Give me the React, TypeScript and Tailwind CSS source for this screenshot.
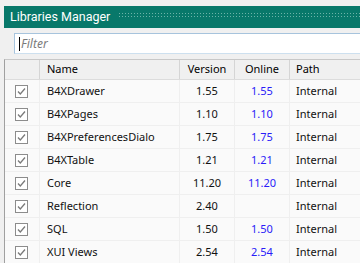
type Lib = {
  name: string;
  version: string;
  online: string;
};

const libs: Lib[] = [
  { name: "B4XDrawer", version: "1.55", online: "1.55" },
  { name: "B4XPages", version: "1.10", online: "1.10" },
  { name: "B4XPreferencesDialo", version: "1.75", online: "1.75" },
  { name: "B4XTable", version: "1.21", online: "1.21" },
  { name: "Core", version: "11.20", online: "11.20" },
  { name: "Reflection", version: "2.40", online: "" },
  { name: "SQL", version: "1.50", online: "1.50" },
  { name: "XUI Views", version: "2.54", online: "2.54" },
];

function Grip() {
  return (
    <svg width="260" height="8" className="ml-[9px] shrink-0">
      <defs>
        <pattern id="dots" width="3" height="3" patternUnits="userSpaceOnUse">
          <rect x="0" y="0" width="1" height="1" fill="#6cb3a8" />
        </pattern>
      </defs>
      <rect x="0" y="0" width="260" height="5" fill="url(#dots)" />
    </svg>
  );
}

function CheckBox() {
  return (
    <svg width="13" height="13" viewBox="0 0 13 13">
      <rect x="0.5" y="0.5" width="12" height="12" fill="#fff" stroke="#8c8c8c" />
      <polyline points="3,6.5 5.3,9 10,3.5" fill="none" stroke="#7a7a7a" strokeWidth="1.3" />
    </svg>
  );
}

export default function App() {
  return (
    <div className="w-[360px] h-[263px] overflow-hidden bg-[#f0f0f0] pt-[6px] pl-[4px] font-['Noto_Sans',sans-serif]">
      <div className="h-[22px] bg-[#08786a] flex items-center pl-[6px] overflow-hidden">
        <span className="text-white text-[12.5px] leading-none whitespace-nowrap font-['Roboto',sans-serif]">Libraries Manager</span>
        <Grip />
      </div>

      <div className="pt-[5px] pl-[10px]">
        <div className="h-[21px] bg-white border border-[#a7c4dd] border-b-[#cde0ef] border-r-0 flex items-center pl-[4px]">
          <span className="w-px h-[14px] bg-black" />
          <span className="ml-[1px] text-[12px] italic text-[#7a7a7a] leading-none">Filter</span>
        </div>
      </div>

      <div className="mt-[5px] border-l border-t border-[#a0a0a0] border-t-[#c8c8c8]">
        <div className="h-[20px] flex text-[11px] text-black bg-[#f0f0f0] border-b border-[#dcdcdc]">
          <div className="w-[35px] border-r border-[#d5d5d5]" />
          <div className="w-[140px] border-r border-[#d5d5d5] flex items-center pl-[7px]">Name</div>
          <div className="w-[55px] border-r border-[#d5d5d5] flex items-center justify-center">Version</div>
          <div className="w-[55px] border-r border-[#d5d5d5] flex items-center justify-center">Online</div>
          <div className="flex-1 flex items-center pl-[6px]">Path</div>
        </div>
        {libs.map((lib) => (
          <div key={lib.name} className="h-[23px] flex text-[11px] text-[#111] bg-[#fafafa] border-b border-[#efefef]">
            <div className="w-[35px] border-r border-[#efefef] flex items-center pl-[10px]">
              <CheckBox />
            </div>
            <div className="w-[140px] border-r border-[#efefef] flex items-center pl-[7px] whitespace-nowrap overflow-hidden">{lib.name}</div>
            <div className="w-[55px] border-r border-[#efefef] flex items-center justify-center">{lib.version}</div>
            <div className="w-[55px] border-r border-[#efefef] flex items-center justify-center text-[#2a1cf8]">{lib.online}</div>
            <div className="flex-1 flex items-center pl-[6px]">Internal</div>
          </div>
        ))}
      </div>
    </div>
  );
}
